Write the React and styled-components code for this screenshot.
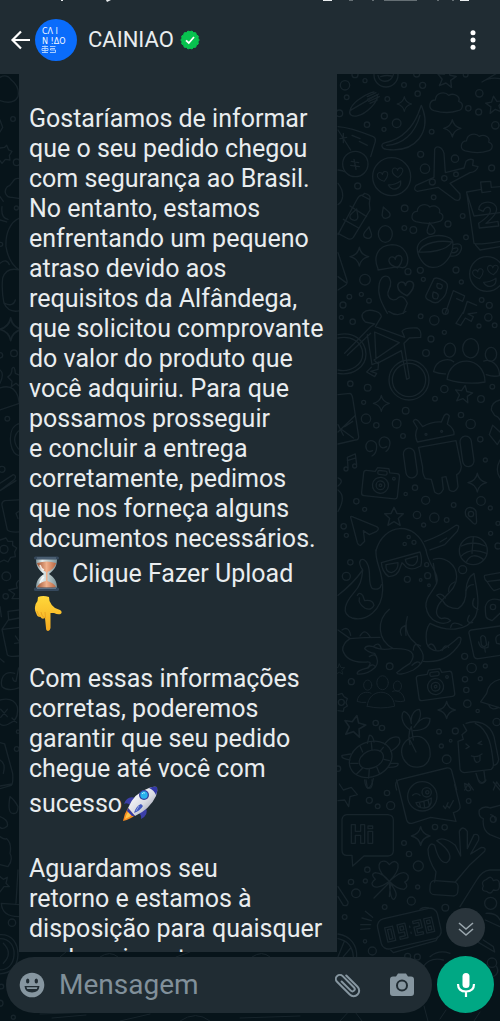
import React from 'react';
import styled, { createGlobalStyle } from 'styled-components';

const GlobalStyle = createGlobalStyle`
  * {
    box-sizing: border-box;
  }

  body {
    margin: 0;
    background: #07141a;
    font-family: Roboto, 'Liberation Sans', sans-serif;
    color: #e9edef;
  }

  svg {
    display: block;
  }
`;

const Screen = styled.div`
  display: flex;
  flex-direction: column;
  height: 100vh;
  overflow: hidden;
`;

const Header = styled.header`
  background: #202c33;
`;

const StatusBar = styled.div`
  display: flex;
  justify-content: space-between;
  height: 6px;
  padding: 0 31px 0 60px;
`;

const Toolbar = styled.div`
  display: flex;
  align-items: center;
  height: 68px;
  padding: 0 14px 0 8px;
`;

const IconButton = styled.button`
  display: flex;
  align-items: center;
  justify-content: center;
  flex: none;
  width: ${(props) => props.$size || 26}px;
  height: ${(props) => props.$size || 26}px;
  padding: 0;
  border: 0;
  border-radius: 50%;
  background: ${(props) => props.$background || 'transparent'};
  color: ${(props) => props.$color || '#ffffff'};
  cursor: pointer;
`;

const Avatar = styled.svg`
  flex: none;
  width: 42px;
  height: 42px;
  margin-left: 1px;
`;

const Title = styled.h1`
  flex: 1;
  display: flex;
  align-items: center;
  gap: 6px;
  margin: 0 0 0 11px;
  font-size: 22px;
  line-height: 30px;
  font-weight: 400;
`;

const Body = styled.main`
  position: relative;
  display: flex;
  flex-direction: column;
  flex: 1;
  min-height: 0;
`;

const WallpaperSvg = styled.svg`
  position: absolute;
  inset: 0;
  width: 100%;
  height: 100%;
  fill: none;
  stroke: #17242b;
  stroke-width: 4;
  stroke-linecap: round;
  stroke-linejoin: round;
`;

const Messages = styled.section`
  position: relative;
  flex: 1;
  min-height: 0;
  overflow: hidden;
  padding-left: 19px;
`;

const Bubble = styled.article`
  width: fit-content;
  padding: 30px 14px 10px 10px;
  background: #202c33;
  font-size: 25px;
  line-height: 30px;
`;

const Paragraph = styled.p`
  margin: ${(props) => (props.$spaced ? 30 : 0)}px 0 0;
  white-space: pre-line;
`;

const EmojiLine = styled.span`
  display: flex;
  align-items: center;
  gap: ${(props) => props.$gap || 0}px;
  height: 40px;
`;

const Emoji = styled.svg`
  flex: none;
  width: 36px;
  height: 36px;
`;

const ScrollDown = styled.div`
  position: absolute;
  right: 15px;
  bottom: 5px;
`;

const Composer = styled.form`
  position: relative;
  display: flex;
  align-items: center;
  gap: 5px;
  padding: 4px 6px 8px;
`;

const Pill = styled.div`
  display: flex;
  align-items: center;
  flex: 1;
  min-width: 0;
  height: 56px;
  padding: 0 17px 0 13px;
  border-radius: 28px;
  background: #202c33;
`;

const MessageInput = styled.input`
  flex: 1;
  min-width: 0;
  margin: 0 8px 0 14px;
  padding: 0;
  border: 0;
  outline: 0;
  background: transparent;
  color: #e9edef;
  font-family: inherit;
  font-size: 28px;
  line-height: 34px;

  &::placeholder {
    color: #81909a;
    opacity: 1;
  }
`;

const Actions = styled.div`
  display: flex;
  gap: 28px;
`;

const Dots = ({ items }) =>
  items.map(([x, y, r]) => <circle key={`${x}-${y}`} cx={x} cy={y} r={r} />);

const Sparkle = ({ x, y, s = 26 }) => (
  <path
    transform={`translate(${x} ${y}) scale(${s / 26})`}
    d="M0-26Q4-5 26 0Q4 5 0 26Q-4 5-26 0Q-4-5 0-26Z"
  />
);

const Star = ({ x, y, s = 26, turn = 0 }) => (
  <path
    transform={`translate(${x} ${y}) rotate(${turn}) scale(${s / 26})`}
    d="M0-26L8-9L26-8L12 5L17 24L0 14L-17 24L-12 5L-26-8L-8-9Z"
  />
);

const Cloud = ({ x, y, s = 1 }) => (
  <path
    transform={`translate(${x} ${y}) scale(${s})`}
    d="M-36 24C-56 18-50-8-32-8C-30-32-2-34 8-22C26-32 44-16 38-4C56 2 50 22 36 24C14 32-14 30-36 24Z"
  />
);

const Heart = ({ x, y, s = 1, turn = 0 }) => (
  <path
    transform={`translate(${x} ${y}) rotate(${turn}) scale(${s})`}
    d="M0 18C-30 0-20-20-8-18C-3-17 0-12 0-8C2-14 6-18 12-17C26-14 22 4 0 18Z"
  />
);

const Drop = ({ x, y, turn = 0 }) => (
  <path
    transform={`translate(${x} ${y}) rotate(${turn})`}
    d="M0-18C4-8 13 0 12 8C10 20-10 20-12 8C-13 0-4-8 0-18Z"
  />
);

const Camera = ({ x, y, turn }) => (
  <g transform={`translate(${x} ${y}) rotate(${turn})`}>
    <path d="M-46-34H-20L-14-46H20L24-34H46Q54-34 54-26V34Q54 42 46 42H-46Q-54 42-54 34V-26Q-54-34-46-34Z" />
    <rect x="-12" y="-38" width="28" height="12" rx="5" />
    <circle cx="0" cy="6" r="24" />
    <circle cx="0" cy="6" r="13" />
    <circle cx="0" cy="6" r="4" />
    <circle cx="38" cy="-18" r="4" />
  </g>
);

const People = ({ x, y, s, turn = 0 }) => (
  <g transform={`translate(${x} ${y}) rotate(${turn}) scale(${s})`}>
    <ellipse cx="8" cy="-58" rx="24" ry="29" />
    <ellipse cx="-54" cy="-48" rx="17" ry="21" />
    <ellipse cx="70" cy="-44" rx="17" ry="21" />
    <path d="M-56 40C-52-36 52-40 58 40Q0 54-56 40Z" />
    <path d="M-62 24Q-80 26-98 20C-94-20-54-24-40-14M60 18Q84 24 100 18C98-14 70-32 50-22" />
  </g>
);

const LoveFace = ({ x, y, r }) => (
  <g>
    <circle cx={x} cy={y} r={r} />
    <Heart x={x - 26} y={y} s={0.8} turn={-15} />
    <Heart x={x + 18} y={y - 12} s={0.8} turn={-5} />
    <path d={`M${x - 10} ${y + 25}Q${x + 10} ${y + 25} ${x + 27} ${y + 13}C${x + 30} ${y + 38} ${x + 2} ${y + 46} ${x - 10} ${y + 25}Z`} />
  </g>
);

const third = 'scale(0.3333)';

function Wallpaper() {
  return (
    <WallpaperSvg viewBox="0 74 500 947" preserveAspectRatio="xMidYMid slice" aria-hidden="true">
      {/* food, plane, smileys */}
      <g transform={`translate(330 70) ${third}`}>
        <Dots
          items={[
            [45, 46, 14], [105, 32, 6], [50, 82, 7], [172, 87, 7], [222, 45, 7], [278, 46, 9],
            [263, 71, 8], [448, 70, 11], [415, 115, 8], [446, 126, 9], [163, 138, 9], [200, 160, 13],
            [111, 164, 8], [162, 178, 6], [305, 185, 7], [496, 166, 11], [28, 130, 10], [272, 253, 9],
            [375, 266, 11], [285, 296, 14], [343, 325, 8], [307, 336, 9], [378, 313, 7], [485, 294, 9],
            [83, 348, 9], [311, 382, 7], [224, 415, 10], [398, 438, 7], [354, 462, 9], [223, 474, 7],
            [250, 480, 10], [408, 502, 7], [105, 629, 16], [234, 605, 9], [271, 601, 9], [378, 600, 9],
            [280, 628, 6], [394, 636, 6], [58, 680, 7], [94, 673, 6], [117, 692, 7], [39, 705, 9],
            [455, 690, 7], [478, 706, 9], [75, 14, 9], [260, 12, 9], [407, 14, 7],
          ]}
        />
        <circle cx="168" cy="15" r="36" />
        <path d="M144 16C150 42 182 38 190 14M152 20Q170 14 184 18" />
        <Star x={350} y={24} s={28} turn={8} />
        <path d="M456 36L510 4M456 36Q480 20 510 26" />
        <Star x={494} y={104} s={26} turn={-8} />
        <path d="M60 122C64 100 96 78 124 68L132 66M142 74C146 98 106 132 84 137C66 142 56 134 60 122Z" />
        <path d="M112 80L138 68M112 88L146 72M116 94L148 80M120 100L142 90" />
        <Sparkle x={223} y={102} s={22} />
        <Cloud x={348} y={98} />
        <Cloud x={440} y={220} s={0.95} />
        <Cloud x={292} y={432} s={0.95} />
        <Sparkle x={367} y={175} s={26} />
        <path d="M274 106L280 122C300 180 262 250 170 238C154 236 150 222 166 218C220 208 250 166 264 132ZM170 226C216 224 254 194 270 136" />
        <path d="M24 170Q60 172 130 200Q138 204 136 214L122 260M24 300Q40 302 46 306M24 180L62 240M30 206L50 202M40 190L40 218M88 214L112 226M66 196L90 206" />
        <circle cx="76" cy="282" r="38" />
        <path d="M64 274L86 278M62 286L88 290M72 268L78 298" />
        <LoveFace x={185} y={320} r={57} />
        <LoveFace x={471} y={612} r={52} />
        <path d="M314 238C318 226 336 228 342 250L346 308L402 294L408 274Q420 264 430 270L428 286L444 290Q440 306 420 308L360 340L390 372Q394 396 376 390L324 352L262 364Q248 360 258 346L312 322Z" />
        <path d="M24 494L80 390Q88 374 98 376L104 370Q122 374 120 386L118 400L120 420L70 502Q62 512 50 504L24 490M60 408L110 440M40 448L86 474M98 378L118 388" />
        <Drop x={74} y={434} turn={20} />
        <Drop x={166} y={428} turn={-20} />
        <Drop x={114} y={488} turn={10} />
        <Drop x={302} y={476} turn={-10} />
        <ellipse cx="166" cy="492" rx="21" ry="25" />
        <path d="M144 596C128 560 144 526 186 524C226 524 240 562 230 586Q222 598 206 590Q180 594 144 600Z" />
        <Heart x={198} y={576} turn={-15} />
        <path d="M510 350L484 352L482 334L452 336L454 358L410 366L432 520Q440 526 510 514M410 368L432 438L510 428M436 524L450 540L510 530M452 338L456 368L482 364" />
        <path d="M446 418C448 388 500 390 500 418C500 436 480 450 468 460L504 454L506 468L448 474L446 460C470 444 486 428 480 416C476 408 464 412 460 424Z" />
        <path d="M262 532C270 492 354 486 368 514C374 554 340 596 306 592C280 590 260 556 262 532ZM266 546C280 516 330 510 366 516C350 542 300 548 266 546Z" />
        <path d="M370 524Q398 516 394 538Q386 562 362 558M370 536Q382 530 384 538Q380 550 366 548" />
        <Sparkle x={88} y={560} s={28} />
        <path d="M24 548L50 628Q54 642 46 646L24 660M24 620L48 638" />
        <path d="M148 640C156 612 178 612 182 636C184 656 170 660 174 676C182 696 200 690 206 682Q222 674 232 700L220 730M148 640C140 680 160 706 172 730" />
        <Heart x={228} y={656} s={1.2} turn={-8} />
        <path d="M312 626Q322 620 340 632Q358 640 350 660Q348 678 332 690Q318 706 300 692Q284 686 288 676ZM322 640Q344 642 334 656Q316 658 322 640ZM310 666Q332 670 322 686Q302 690 310 666" />
        <path d="M346 730L370 662L404 678L398 694L380 686M400 730L412 694L440 706" />
        <path d="M24 340Q40 360 38 380Q36 396 24 404" />
      </g>
      {/* bicycle, people, robot */}
      <g transform={`translate(330 310) ${third}`}>
        <Dots
          items={[
            [34, 22, 6], [68, 35, 8], [272, 19, 7], [313, 31, 14], [343, 67, 6], [303, 87, 9],
            [475, 22, 11], [447, 48, 6], [494, 46, 7], [288, 129, 10], [343, 237, 11], [315, 266, 7],
            [453, 267, 10], [487, 230, 7], [113, 233, 10], [101, 277, 6], [227, 302, 10], [108, 326, 14],
            [139, 346, 8], [200, 341, 13], [219, 378, 7], [393, 315, 8], [422, 342, 14], [451, 388, 8],
            [466, 450, 6], [79, 574, 8], [104, 598, 6], [227, 552, 5], [255, 533, 8], [287, 571, 12],
            [371, 585, 7], [453, 573, 13], [481, 594, 6], [261, 615, 11], [313, 623, 14], [350, 630, 7],
            [281, 645, 6], [41, 649, 8], [49, 676, 6], [482, 670, 6], [236, 681, 5], [252, 697, 6],
            [224, 702, 5], [504, 708, 9], [346, 4, 9], [61, 221, 8], [504, 640, 6],
          ]}
        />
        <path d="M24 74C70 64 106 90 108 132C108 170 70 198 24 190M24 84C64 76 98 96 98 132C98 164 62 188 24 180" />
        <circle cx="237" cy="210" r="60" />
        <circle cx="237" cy="210" r="50" />
        <path d="M44 130L120 52L134 42L106 36Q90 20 100 8Q112-4 138 4Q152 8 154 20L136 50L224 82L216 64Q222 52 262 54Q276 62 272 82L238 84L222 100L238 204L230 208L214 122L142 160L132 150L208 98L134 66L138 146M122 70L52 136M112 74L126 164L146 156L144 178L122 184L140 190L134 200L110 186L124 172" />
        <path d="M176 4Q204 24 228 4M378 40L400 6M378 40L392 46L406 24L424 34L430 20L414 12L440 8" />
        <People x={410} y={172} s={1} turn={4} />
        <Star x={401} y={252} s={26} turn={10} />
        <Sparkle x={154} y={280} s={24} />
        <path d="M24 254L60 250Q66 252 68 264L86 380Q86 390 76 390L24 402M24 366L74 318M24 344L40 376M34 358L70 384M44 350L68 334" />
        <path d="M250 334Q254 324 264 332L278 350Q306 334 334 336L342 318Q350 306 358 318L352 342Q374 356 372 374L262 396Q252 374 262 354Z" />
        <path d="M266 412L378 392L394 470Q392 490 380 494L384 530Q376 552 358 540L348 500L336 502L340 538Q330 560 314 546L304 508L286 506Q276 490 278 472Z" />
        <rect x="224" y="414" width="34" height="90" rx="17" transform="rotate(-8 241 459)" />
        <rect x="394" y="378" width="34" height="92" rx="17" transform="rotate(-8 411 424)" />
        <circle cx="288" cy="373" r="3" />
        <circle cx="335" cy="364" r="3" />
        <path d="M128 422C110 432 104 410 110 400C118 386 140 392 140 410Q140 430 126 438M170 410C150 422 144 400 150 388C160 374 180 382 180 400Q178 418 168 424" />
        <path d="M54 472L52 442L76 432L80 464M52 452L78 444" />
        <circle cx="48" cy="477" r="6" />
        <circle cx="74" cy="468" r="6" />
        <Camera x={152} y={520} turn={6} />
        <Sparkle x={442} y={518} s={28} />
        <path d="M510 270Q484 276 484 300L494 316Q506 320 510 330M488 346L478 374L502 404L510 390M488 346L510 366M24 504Q44 512 24 528M24 540Q50 560 24 604M510 450Q494 480 510 504" />
        <path d="M62 622Q60 616 72 622L140 650Q150 656 140 664L118 674L100 662L104 694L92 706Q86 708 82 698Z" />
        <Star x={192} y={620} s={28} />
        <path d="M408 618C398 588 430 586 438 604L440 636Q438 646 430 640Z" />
        <circle cx="423" cy="612" r="8" />
        <path d="M138 722C160 640 256 628 288 720M284 694Q330 680 378 646Q392 644 382 664L344 704L300 720M330 696L350 684" />
      </g>
      {/* octopus, turtle, ice cream */}
      <g transform={`translate(330 550) ${third}`}>
        <Dots
          items={[
            [61, 37, 8], [49, 79, 12], [232, 88, 9], [272, 90, 4], [293, 77, 9], [297, 106, 4],
            [398, 59, 12], [179, 349, 10], [64, 395, 9], [404, 319, 9], [425, 354, 14], [466, 348, 6],
            [405, 388, 8], [451, 386, 6], [409, 420, 8], [412, 461, 11], [443, 483, 5], [137, 519, 8],
            [156, 534, 8], [327, 545, 7], [376, 543, 9], [334, 588, 6], [362, 572, 4], [350, 628, 13],
            [500, 516, 11], [24, 656, 8], [290, 44, 6], [489, 171, 8],
          ]}
        />
        <path d="M138 0C134 40 160 60 158 120C156 180 110 216 66 204C30 190 48 156 70 130C90 108 96 90 98 60Q84 40 92 30Q104 22 114 46C124 70 112 104 128 116Q150 122 154 104" />
        <path d="M98 60Q70 100 24 136M82 136Q88 124 98 136L104 152Q128 148 132 166Q124 184 104 174Q84 160 88 144" />
        <path d="M154 38L270 6Q278 30 272 48Q240 66 224 46L216 38L210 54Q204 78 176 80Q156 66 154 38ZM168 44L204 38Q206 62 184 68Q166 66 168 44ZM226 28L262 18Q266 38 250 46Q228 48 226 28Z" />
        <path d="M288 0C296 50 330 70 320 100C306 130 286 140 288 170C294 216 340 230 362 212Q350 200 334 206Q310 196 326 164C344 134 380 120 380 80C380 44 344 16 310 28M310 40L320 100" />
        <path d="M432 70Q410 84 408 120Q410 160 384 176Q350 176 338 152L320 136Q334 126 346 144M432 70C440 120 452 160 436 200C410 246 350 246 300 220Q284 240 290 280Q300 306 330 302Q356 290 386 262Q398 260 390 280C370 310 340 340 280 334" />
        <path d="M356 124Q354 104 374 96M408 122Q414 104 430 104M444 178Q420 170 432 146M428 218Q404 220 418 196M362 232Q366 210 396 226M336 302Q344 280 356 292M294 288Q308 272 318 300" />
        <path d="M178 178C140 210 140 270 190 296C244 294 262 310 240 340Q220 352 200 368Q204 380 250 360C300 330 280 300 244 268Q220 240 232 200M214 256Q204 236 226 226L228 256M250 300Q252 274 272 288M246 346Q264 328 272 342M186 296Q150 302 130 290Q108 284 104 296Q116 308 134 310Q150 334 136 352Q110 376 82 372Q78 362 112 354Q130 334 110 336Q50 340 38 300Q38 280 60 266Q100 262 150 262M24 240L60 266M36 240Q56 226 62 256M90 258Q104 232 120 260M130 290Q146 272 154 296M118 320Q134 308 140 322M114 354Q126 338 136 350" />
        <circle cx="430" cy="2" r="42" />
        <path d="M392 20Q420-10 470 10M410 34Q426 4 460 28M394-12Q430-30 466-12M430-40L426 10" />
        <path d="M510 68L464 76Q460 86 472 96Q486 118 492 122L510 116M474 94L510 90" />
        <path d="M472 204Q466 206 466 170Q474 140 510 150M472 206L486 212L510 190" />
        <path d="M510 228L424 240Q414 242 418 254L432 320Q436 328 446 326L510 316M452 262Q458 252 466 262L470 284Q462 296 454 284ZM446 276Q450 300 474 292L476 276M464 294L466 306M510 254Q492 256 500 280L510 282" />
        <People x={152} y={440} s={0.72} />
        <Camera x={316} y={404} turn={-8} />
        <Sparkle x={350} y={480} s={26} />
        <path d="M510 388Q476 396 470 430L452 456L510 474M476 464Q484 484 506 472" />
        <Star x={74} y={528} s={32} turn={12} />
        <Star x={28} y={358} s={16} />
        <circle cx="34" cy="457" r="9" />
        <path d="M24 434L36 430L42 440L52 446L48 458L52 468L42 474L40 484L24 482" />
        <ellipse cx="122" cy="628" rx="66" ry="52" transform="rotate(-24 122 628)" />
        <ellipse cx="124" cy="628" rx="38" ry="26" transform="rotate(-24 124 628)" />
        <path d="M164 582Q184 556 206 562Q220 582 182 604M112 580L118 556Q128 554 132 576M62 612L36 616Q32 626 60 630M180 640L204 640Q208 652 176 652M108 690L112 714Q124 716 130 686M90 588L98 606M62 640L84 640M80 672L98 654M116 684L118 656M148 670L140 650M178 632L162 628M160 592L150 604M124 578L126 600" />
        <path d="M258 606L240 570M246 562C222 570 206 596 220 626C240 662 290 660 300 620C304 580 280 550 246 562ZM240 584Q232 550 244 530L250 570M240 540C210 520 214 490 222 484Q240 490 244 520C240 490 258 478 268 478Q280 500 252 532Q276 496 300 506Q300 540 250 542" />
        <path d="M408 520C440 508 480 520 492 560L506 628Q504 644 492 646M400 524L410 542L396 554L400 568L384 574L390 658Q394 668 404 668L484 658Q492 652 490 640C486 600 480 540 436 520M438 670L446 694Q454 706 466 694L462 664M408 582L418 590L408 596M454 574L444 580L456 584M424 618Q440 624 456 612M432 622Q436 646 450 632L450 618" />
        <path d="M200 720Q190 692 212 688L350 654Q364 652 366 666L380 720M404 720L416 700L430 720M490 720L500 696L510 710" />
      </g>
      {/* chat bubbles, hand, clover, clock */}
      <g transform={`translate(330 780) ${third}`}>
        <Dots
          items={[
            [171, 39, 8], [118, 61, 9], [143, 79, 7], [182, 77, 12], [416, 63, 7], [315, 141, 8],
            [344, 142, 8], [222, 189, 7], [237, 222, 8], [265, 258, 15], [112, 269, 8], [63, 306, 8],
            [106, 303, 6], [78, 340, 13], [263, 321, 6], [244, 363, 12], [164, 381, 7], [346, 383, 10],
            [44, 411, 7], [105, 484, 5], [127, 513, 12], [233, 529, 9], [262, 531, 9], [482, 370, 18],
            [490, 118, 9], [486, 548, 14],
          ]}
        />
        <path d="M200 0L230 120Q234 132 246 130L302 112L378 124L370 98Q394 92 390 76L374 14" />
        <circle cx="277" cy="49" r="44" />
        <circle cx="290" cy="37" r="14" />
        <circle cx="292" cy="37" r="5" />
        <path d="M248 46Q258 36 270 46M258 68Q284 66 304 54Q306 84 282 84Q262 84 258 68M268 68L272 82M282 66L284 84M294 60L298 76M340 78L346 86L354 68M352 78L358 84L370 62" />
        <path d="M28 12L40 30L64 22L82 44L60 50L56 80L44 60L24 62M104 0Q106 30 122 24Q130 14 126 0" />
        <path d="M50 104H174Q190 106 190 120V212Q190 226 174 228H102L68 258L66 226H50Q36 226 36 210V118Q38 106 50 104Z" />
        <path d="M64 134H76V154H92V134H104V190H92V166H76V190H64ZM114 154H128V190H114ZM114 138H128V146H114Z" />
        <Sparkle x={272} y={168} s={28} />
        <path d="M314 306L318 276Q294 240 294 208Q300 184 314 196C320 220 330 250 350 248C370 234 360 210 320 182Q340 166 376 196L392 228L388 154Q398 134 412 154V206L432 164Q450 160 446 180L422 222L454 202Q470 202 464 214L420 254L376 306" />
        <rect x="300" y="304" width="84" height="42" rx="14" transform="rotate(4 342 325)" />
        <path d="M178 304C150 280 140 258 152 246Q168 238 178 254Q194 236 204 252C208 270 194 288 178 304C206 278 224 270 234 286Q238 300 224 306Q238 320 222 328Q200 328 178 304C196 330 206 346 192 358Q180 360 178 304C150 326 128 326 126 310Q130 300 136 298Q120 282 136 278Q160 280 178 304ZM176 310L132 354M182 312L178 350" />
        <path d="M24 320L54 366Q56 380 40 376L24 350" />
        <path d="M92 434L122 434M92 448L120 446M96 414L124 422M106 394L128 412" />
        <rect x="146" y="400" width="184" height="92" rx="22" transform="rotate(-13 238 446)" />
        <path d="M182 510L190 518L318 482L324 470M270 388Q280 380 296 384" />
        <g transform="translate(162 444) rotate(-13)">
          <path d="M2 0H26V44H2ZM9 7H19V37H9ZM40 0H64V44H40V37H57V25H40ZM47 7H57V18H47ZM76 12V16M76 30V34M88 0H112V25H95V37H112V44H88V18H105V7H88ZM122 0H146V44H122ZM129 7H139V17H129ZM129 26H139V37H129Z" />
        </g>
        <path d="M24 462C62 468 82 496 80 530M24 476C52 482 68 500 70 530M24 530L42 486M40 530L62 504" />
        <path d="M510 76L480 84Q462 76 448 90Q444 110 460 116Q456 150 480 164L510 176M482 104Q498 108 496 124M510 270L480 270Q456 272 440 300L390 380M404 10Q424 20 422 30Q406 40 404 10M446 0Q456 16 468 0M490 6L510 30" />
        <path d="M470 298Q484 284 490 302Q510 294 508 316Q510 336 490 330Q482 346 470 334Q452 334 460 318Q452 304 470 298M468 400Q500 398 510 420M466 420L510 440M440 484L494 516L490 500L460 480M300 530Q326 508 360 520M280 560Q300 530 340 540M500 560Q510 580 490 590" />
      </g>
      {/* bottom strip */}
      <g strokeWidth="1">
        <path d="M52 1018L86 1015M40 1014L96 1012M120 1021L150 1014M180 1021Q196 1010 210 1021M240 1018L300 1016M340 1021L352 1008L362 1021M424 1006L428 1021M440 1019L446 1010M474 1021L480 1012" />
        <path d="M60 957L66 952M100 957Q110 950 118 957M176 957L190 952M252 957Q262 950 270 957" />
      </g>
      {/* left gutter */}
      <g transform={`translate(0 70) ${third}`}>
        <Dots items={[[39, 147, 7], [50, 277, 10], [49, 414, 6], [42, 850, 10], [0, 856, 8], [22, 1046, 7], [6, 1198, 9], [2, 523, 6]]} />
        <path d="M0 22Q20 10 34 30Q60 50 54 80Q40 106 0 92M0 150L8 172L0 186M0 234L14 232L20 226L26 240L36 244L28 256L30 270L16 268L6 280L0 272M60 326C36 320 40 346 22 350C8 366 20 384 36 382L60 386M0 380L10 394M6 410Q2 444 24 448M0 450L20 456M60 444C30 456 16 490 18 530Q26 580 58 600M0 580Q20 564 28 584M58 600Q20 590 8 624Q4 660 12 700Q26 730 60 722M14 700Q40 712 46 690M0 900Q14 910 0 940M24 920Q36 914 36 896Q44 884 46 910L60 916M24 922L36 934L34 950L48 940L60 950M0 954Q40 940 54 980L58 1000L0 1020M60 1060C40 1064 28 1084 32 1120C36 1144 48 1156 60 1158M60 1080Q44 1090 44 1110Q46 1130 60 1140M0 1240L40 1214Q50 1216 44 1228L0 1262M4 1260L48 1232M56 1290L14 1292Q4 1296 6 1306L22 1380Q28 1388 58 1386M60 1322L48 1330L54 1346" />
        <Sparkle x={32} y={778} s={34} />
      </g>
      <g transform={`translate(0 540) ${third}`}>
        <Dots items={[[12, 28, 12], [19, 109, 13], [17, 169, 8], [50, 627, 7], [36, 1148, 11], [54, 575, 5], [4, 1340, 7], [40, 1432, 6], [0, 1390, 9]]} />
        <path d="M0 0L18-6L24 4L38 4L38 16L50 24L44 36L46 50L32 52L24 66L12 60L0 66M60 120Q44 126 52 144L26 150L44 162L36 176L58 176M0 200L4 230M24 214L56 210M24 214L26 238L6 268L22 344Q28 352 56 348M8 268L58 262M26 240L58 234M46 288L60 308L44 310M0 356L12 366M56 384L48 424Q40 426 38 414M44 400C10 390 0 420 6 440Q26 456 56 444M0 480Q40 470 52 500Q58 540 26 552Q10 560 0 552M2 508L22 530M22 508L2 532M36 534L50 548M0 608L14 612L38 700Q40 730 34 736L0 746M0 738L36 732M0 660Q18 670 10 700M30 770C26 790 24 820 38 820Q54 824 54 800Q44 780 30 770M0 830Q26 840 22 858Q8 870 0 862M0 890Q14 900 20 896Q36 910 30 940Q40 960 24 980L0 974M0 1010L10 1018L22 1012L18 1030L28 1040L12 1040L0 1056M54 990L48 1090M4 1090L58 1094M4 1090Q6 1130 56 1130M0 1184C36 1182 54 1210 54 1244C52 1290 24 1300 0 1302M0 1196C30 1196 44 1220 42 1246C40 1276 20 1290 0 1290M10 1210Q40 1240 10 1270" />
      </g>
    </WallpaperSvg>
  );
}

function Logo() {
  return (
    <Avatar viewBox="0 0 42 42" role="img" aria-label="CAINIAO">
      <circle cx="21" cy="21" r="21" fill="#0a6cfb" />
      <g fill="#f2f8ff" fontFamily="'DejaVu Sans', sans-serif" fontSize="8">
        <text x="7" y="15">CΛ I</text>
        <text x="7" y="25">N !ΔO</text>
      </g>
      <path
        d="M7 27.5H13M10 26.5V34M7 29.5H13V31.5H7ZM7 33.5H13M15 27.5H20.5M20 29.5H15.5V31H20.5V33.5H15"
        fill="none"
        stroke="#b9d8ff"
        strokeWidth="0.9"
      />
    </Avatar>
  );
}

function Hourglass() {
  return (
    <Emoji viewBox="0 0 36 36" role="img" aria-label="ampulheta">
      <defs>
        <linearGradient id="glass" x1="0" x2="1">
          <stop offset="0" stopColor="#7d9298" />
          <stop offset="0.3" stopColor="#e6eeee" />
          <stop offset="0.6" stopColor="#b8c8ca" />
          <stop offset="1" stopColor="#80979c" />
        </linearGradient>
        <linearGradient id="sand" x1="0" x2="1">
          <stop offset="0" stopColor="#9c5435" />
          <stop offset="0.5" stopColor="#f0b08b" />
          <stop offset="1" stopColor="#b96540" />
        </linearGradient>
      </defs>
      <path d="M7 3H28C28 11 25 14 20 18C25 21 28 25 28 32H7C7 25 10 21 15 18C10 14 7 11 7 3Z" fill="url(#glass)" />
      <path d="M8 7Q18 4 27 7C26 12 22 14 18 16.5C13 14 9 11 8 7Z" fill="url(#sand)" />
      <path d="M17 16H18.5V25Q25 27 27 31Q18 34 8 31Q11 26 17 25Z" fill="url(#sand)" />
      <path d="M11 9Q12 13 15 14M11 27Q12 23 15 21" stroke="#fff" strokeWidth="1.5" fill="none" opacity="0.8" />
      <rect x="5" y="0.5" width="25" height="3" rx="1.5" fill="#35485c" />
      <rect x="5" y="31.5" width="25" height="3.5" rx="1.5" fill="#35485c" />
      <path d="M8 2H27M8 32.5H27" stroke="#71879a" strokeWidth="0.7" />
    </Emoji>
  );
}

function PointingDown() {
  return (
    <Emoji viewBox="0 0 36 36" role="img" aria-label="dedo apontando para baixo">
      <defs>
        <linearGradient id="skin" x1="0" y1="0" x2="0" y2="1">
          <stop offset="0" stopColor="#ffd83a" />
          <stop offset="1" stopColor="#f5a91f" />
        </linearGradient>
      </defs>
      <path
        d="M9 1Q14-1 20 1L20.5 5Q22 9 26 12L31 14Q34 16 31.5 18Q29 19 25 17L21.5 17V32Q21 35 19.2 35Q17 35 17 32L16 22Q13 24 11.5 21Q8 21 7.5 18Q5.5 15 6 11Q6 8 8.5 5Z"
        fill="url(#skin)"
      />
      <path d="M8 15Q9 19 11.5 21M12 16Q12 20 16 22M16 16L16.5 22" fill="none" stroke="#e39a1c" strokeWidth="0.7" />
    </Emoji>
  );
}

function Rocket() {
  return (
    <Emoji viewBox="0 0 36 36" role="img" aria-label="foguete">
      <defs>
        <linearGradient id="hull" x1="0" y1="0" x2="1" y2="1">
          <stop offset="0.2" stopColor="#f8f8fb" />
          <stop offset="0.55" stopColor="#d9dbe2" />
          <stop offset="1" stopColor="#81879b" />
        </linearGradient>
      </defs>
      <path d="M14 12Q5 9 2 18Q6 16 9 20ZM24 22Q27 29 19 33Q20 28 15 26Z" fill="#3c3fa8" />
      <path d="M6 22Q2 28 1 35Q9 33 13 29Z" fill="#f58a20" />
      <path d="M7 24Q4 29 3 33Q8 31 11 28Z" fill="#ffc64b" />
      <path d="M6 22Q12 7 27 2Q32 0 35 1Q36 5 34 10Q28 23 13 30Z" fill="url(#hull)" />
      <path d="M27 2Q32 0 35 1Q36 5 34 9Q32 4 27 2Z" fill="#3439a6" />
      <path d="M6 22L13 30L10 30L5 25Z" fill="#3439a6" />
      <circle cx="22" cy="9" r="5" fill="#343e9e" />
      <circle cx="22" cy="9" r="3.7" fill="#27b2ec" />
      <path d="M20 8Q21 6 23 7" stroke="#b5edff" fill="none" />
      <path d="M19 18Q14 20 12 27Q18 25 21 20Z" fill="#4259bd" />
      <path d="M17 20L14 25" stroke="#8d9ce4" />
    </Emoji>
  );
}

function VerifiedBadge() {
  const edge = Array.from({ length: 28 }, (_, i) => {
    const angle = (i * Math.PI) / 14;
    const radius = i % 2 ? 8.2 : 9.2;
    return `${10 + radius * Math.cos(angle)},${10 + radius * Math.sin(angle)}`;
  }).join(' ');

  return (
    <svg width="20" height="20" viewBox="0 0 20 20" role="img" aria-label="verificado">
      <polygon points={edge} fill="#08c24f" stroke="#08c24f" strokeLinejoin="round" />
      <path d="M6 10.3L8.8 13L14 7" fill="none" stroke="#fff" strokeWidth="1.8" />
    </svg>
  );
}

const intro = `Gostaríamos de informar
que o seu pedido chegou
com segurança ao Brasil.
No entanto, estamos
enfrentando um pequeno
atraso devido aos
requisitos da Alfândega,
que solicitou comprovante
do valor do produto que
você adquiriu. Para que
possamos prosseguir
e concluir a entrega
corretamente, pedimos
que nos forneça alguns
documentos necessários.`;

const details = `Com essas informações
corretas, poderemos
garantir que seu pedido
chegue até você com`;

const closing = `Aguardamos seu
retorno e estamos à
disposição para quaisquer
esclarecimentos.`;

function App() {
  return (
    <>
      <GlobalStyle />
      <Screen>
        <Header>
          <StatusBar aria-hidden="true">
            <svg width="52" height="3" viewBox="0 0 52 3" fill="#e9edef">
              <path d="M1 0H3V1H1ZM46 0H51L47 2Z" />
            </svg>
            <svg width="146" height="3" viewBox="0 0 146 3" fill="#e9edef">
              <path d="M0 0H9V1H0ZM137 0H146V1H137Z" />
              <path d="M26 0H30V1H26ZM49 0H51V1H49ZM61 0H94V1H61ZM114 0H116V1H114ZM129 0H131V1H129Z" opacity="0.35" />
            </svg>
          </StatusBar>
          <Toolbar>
            <IconButton type="button" aria-label="Voltar">
              <svg width="24" height="24" viewBox="0 0 24 24" fill="none" stroke="currentColor" strokeWidth="2.2">
                <path d="M21 12H3.5M12 3.5L3.5 12L12 20.5" />
              </svg>
            </IconButton>
            <Logo />
            <Title>
              CAINIAO
              <VerifiedBadge />
            </Title>
            <IconButton type="button" aria-label="Mais opções">
              <svg width="24" height="24" viewBox="0 0 24 24" fill="currentColor">
                <circle cx="12" cy="4.7" r="2.5" />
                <circle cx="12" cy="12" r="2.5" />
                <circle cx="12" cy="19.3" r="2.5" />
              </svg>
            </IconButton>
          </Toolbar>
        </Header>

        <Body>
          <Wallpaper />
          <Messages>
            <Bubble>
              <Paragraph>{intro}</Paragraph>
              <Paragraph>
                <EmojiLine $gap={7}>
                  <Hourglass />
                  Clique Fazer Upload
                </EmojiLine>
                <EmojiLine>
                  <PointingDown />
                </EmojiLine>
              </Paragraph>
              <Paragraph $spaced>
                {details}
                <EmojiLine>
                  sucesso
                  <Rocket />
                </EmojiLine>
              </Paragraph>
              <Paragraph $spaced>{closing}</Paragraph>
            </Bubble>
            <ScrollDown>
              <IconButton type="button" aria-label="Ir para o fim" $size={39} $background="#29343b" $color="#9aa6ad">
                <svg width="18" height="18" viewBox="0 0 18 18" fill="none" stroke="currentColor" strokeWidth="1.6">
                  <path d="M2 4L9 10L16 4M2 10L9 16L16 10" />
                </svg>
              </IconButton>
            </ScrollDown>
          </Messages>

          <Composer onSubmit={(event) => event.preventDefault()}>
            <Pill>
              <IconButton type="button" aria-label="Emojis" $color="#8696a0">
                <svg width="26" height="26" viewBox="0 0 26 26">
                  <circle cx="13" cy="13" r="12.3" fill="currentColor" />
                  <ellipse cx="8.7" cy="8.9" rx="1.7" ry="2.5" fill="#202c33" />
                  <ellipse cx="17.3" cy="8.9" rx="1.7" ry="2.5" fill="#202c33" />
                  <path d="M5.5 14H20.5Q20 20.5 13 20.5Q6 20.5 5.5 14Z" fill="#202c33" />
                  <path d="M7.5 15.3H18.5L17.8 17H8.2Z" fill="currentColor" />
                </svg>
              </IconButton>
              <MessageInput type="text" aria-label="Mensagem" placeholder="Mensagem" />
              <Actions>
                <IconButton type="button" aria-label="Anexar" $color="#8696a0">
                  <svg width="26" height="26" viewBox="0 0 26 26" fill="none" stroke="currentColor" strokeWidth="2" strokeLinecap="round">
                    <path
                      transform="rotate(-45 13 13)"
                      d="M18.5 5V21A5.5 5.5 0 0 1 7.5 21V3A4 4 0 0 1 15.5 3V19A2.2 2.2 0 0 1 11 19V6"
                    />
                  </svg>
                </IconButton>
                <IconButton type="button" aria-label="Câmera" $color="#8696a0">
                  <svg width="26" height="26" viewBox="0 0 26 26" fill="none">
                    <path
                      d="M4 4.5H7L9 1.5H17L19 4.5H22Q25 4.5 25 7.5V21Q25 24 22 24H4Q1 24 1 21V7.5Q1 4.5 4 4.5Z"
                      fill="currentColor"
                    />
                    <circle cx="13" cy="13.5" r="5" stroke="#202c33" strokeWidth="2" />
                  </svg>
                </IconButton>
              </Actions>
            </Pill>
            <IconButton type="button" aria-label="Gravar áudio" $size={57} $background="#00a884">
              <svg width="24" height="28" viewBox="0 0 24 28" fill="none">
                <rect x="8.5" y="2" width="7" height="15" rx="3.5" fill="currentColor" />
                <path d="M4 13Q4 20.5 12 20.5Q20 20.5 20 13M12 20V26" stroke="currentColor" strokeWidth="2.2" />
              </svg>
            </IconButton>
          </Composer>
        </Body>
      </Screen>
    </>
  );
}

export default App;
